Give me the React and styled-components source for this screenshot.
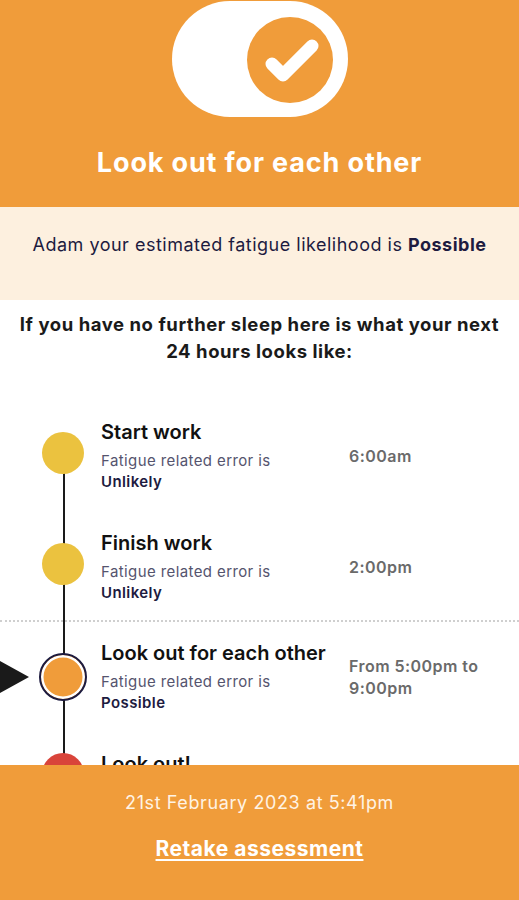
import React from 'react';
import styled, { createGlobalStyle } from 'styled-components';

const orange = '#F09C3A';
const navy = '#1D1B3F';

const GlobalStyle = createGlobalStyle`
  html, body { margin: 0; padding: 0; }
  body {
    font-family: Inter, "Noto Sans", "Liberation Sans", sans-serif;
    background: #fff;
    -webkit-font-smoothing: antialiased;
  }
`

const Page = styled.div`
  display: flex;
  flex-direction: column;
  height: 100vh;
  overflow: hidden;
`
const Header = styled.header`
  flex: 0 0 207px;
  box-sizing: border-box;
  background: ${orange};
  display: flex;
  flex-direction: column;
  align-items: center;
  padding-top: 1px;
`
const Title = styled.h1`
  margin: 30px 0 0;
  color: #fff;
  font-size: 27px;
  line-height: 32px;
  font-weight: 700;
  letter-spacing: 0.85px;
`
const Band = styled.div`
  flex: 0 0 93px;
  box-sizing: border-box;
  background: #FDF0DF;
  display: flex;
  justify-content: center;
  padding-top: 26px;
  color: ${navy};
  font-size: 18px;
  line-height: 24px;
  letter-spacing: 0.5px;
  b { font-weight: 700; }
`
const Scroll = styled.main`
  flex: 1;
  overflow: hidden;
`
const Intro = styled.p`
  margin: 11px 0 0;
  text-align: center;
  font-size: 18.5px;
  line-height: 27px;
  font-weight: 700;
  letter-spacing: 0.55px;
  color: #1a1a1a;
  padding: 0 8px;
`
const Timeline = styled.ol`
  list-style: none;
  margin: 0;
  padding: 56px 0 0;
  position: relative;
  &::before {
    content: '';
    position: absolute;
    left: 63px;
    top: 88px;
    bottom: 0;
    width: 2px;
    background: #1a1a1a;
  }
`
const Item = styled.li`
  position: relative;
  display: grid;
  grid-template-columns: 42px 231px 1fr;
  align-items: start;
  column-gap: 17px;
  padding-left: 42px;
  height: ${p => p.$height}px;
  box-sizing: border-box;
  ${p => p.$now && `
    border-top: 2px dotted #cfcfcf;
    padding-top: 20px;
  `}
`
const Marker = styled.span`
  position: relative;
  z-index: 1;
  width: 42px;
  height: 42px;
  margin-top: ${p => p.$offset}px;
  box-sizing: border-box;
  border-radius: 50%;
  background: ${p => p.$color};
  ${p => p.$current && `
    width: 48px;
    height: 48px;
    margin-left: -3px;
    border: 2.5px solid ${navy};
    box-shadow: inset 0 0 0 2.5px #fff;
  `}
`
const Pointer = styled.span`
  position: absolute;
  left: 0;
  top: 39px;
  width: 0;
  height: 0;
  border-top: 16px solid transparent;
  border-bottom: 16px solid transparent;
  border-left: 29px solid #1a1a1a;
`
const Body = styled.div`
  display: flex;
  flex-direction: column;
`
const ItemTitle = styled.h2`
  margin: 0;
  font-size: 20px;
  line-height: 22px;
  font-weight: 600;
  color: #111;
  white-space: nowrap;
`
const Detail = styled.p`
  margin: 7px 0 0;
  font-size: 15px;
  line-height: 21px;
  letter-spacing: 0.4px;
  color: #55546e;
  b { display: block; color: ${navy}; font-weight: 600; }
`
const Time = styled.div`
  display: flex;
  align-items: center;
  height: 42px;
  margin-top: ${p => p.$offset}px;
  font-size: 16px;
  line-height: 22px;
  font-weight: 600;
  letter-spacing: 0.45px;
  color: #6a6a6a;
  width: 140px;
`
const Footer = styled.footer`
  flex: 0 0 135px;
  background: ${orange};
  display: flex;
  flex-direction: column;
  align-items: center;
`
const DateLine = styled.div`
  margin-top: 26px;
  font-size: 18px;
  line-height: 24px;
  letter-spacing: 0.6px;
  color: #FFF3E4;
`
const Retake = styled.a`
  margin-top: 20px;
  font-size: 21px;
  line-height: 28px;
  font-weight: 700;
  letter-spacing: 0.5px;
  color: #fff;
  text-decoration: underline;
  text-decoration-thickness: 2px;
  text-underline-offset: 3px;
`

const ToggleIcon = () => (
  <svg width="176" height="116" viewBox="0 0 176 116">
    <rect x="0" y="0" width="176" height="116" rx="58" fill="#fff" />
    <circle cx="118" cy="59" r="43" fill={orange} />
    <polyline points="100,63 111,74 140,45" fill="none" stroke="#fff" strokeWidth="13"
      strokeLinecap="round" strokeLinejoin="round" />
  </svg>
);

const events = [
  { title: 'Start work', level: 'Unlikely', time: '6:00am', color: '#EBC23F', height: 111, offset: 11, timeOffset: 14 },
  { title: 'Finish work', level: 'Unlikely', time: '2:00pm', color: '#EBC23F', height: 88, offset: 11, timeOffset: 14 },
  { title: 'Look out for each other', level: 'Possible', time: 'From 5:00pm to 9:00pm', color: orange, height: 133, offset: 11, timeOffset: 14, now: true },
  { title: 'Look out!', level: 'Likely', time: 'From 9:00pm to 6:00am', color: '#D9443A', height: 111, offset: 0, timeOffset: 8 },
];

export default function App() {
  return (
    <Page>
      <GlobalStyle />
      <Header>
        <ToggleIcon />
        <Title>Look out for each other</Title>
      </Header>
      <Band>
        <span>Adam your estimated fatigue likelihood is <b>Possible</b></span>
      </Band>
      <Scroll>
        <Intro>If you have no further sleep here is what your next<br />24 hours looks like:</Intro>
        <Timeline>
          {events.map(e => (
            <Item key={e.title} $now={e.now} $height={e.height}>
              {e.now && <Pointer />}
              <Marker $color={e.color} $current={e.now} $offset={e.offset} />
              <Body>
                <ItemTitle>{e.title}</ItemTitle>
                <Detail>Fatigue related error is <b>{e.level}</b></Detail>
              </Body>
              <Time $offset={e.timeOffset}>{e.time}</Time>
            </Item>
          ))}
        </Timeline>
      </Scroll>
      <Footer>
        <DateLine>21st February 2023 at 5:41pm</DateLine>
        <Retake href="#">Retake assessment</Retake>
      </Footer>
    </Page>
  );
}
